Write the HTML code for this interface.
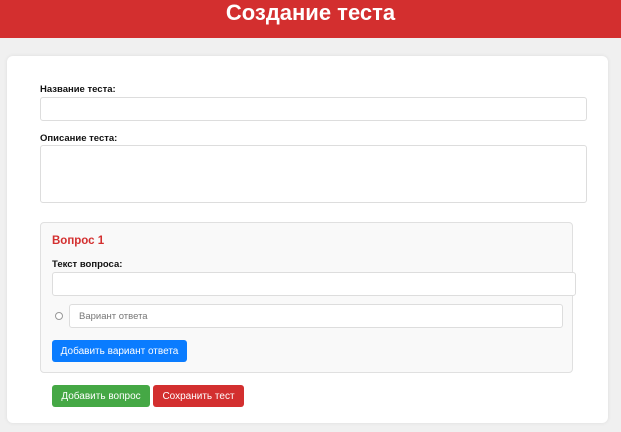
<!DOCTYPE html>
<html><head><meta charset="utf-8"><style>
*{box-sizing:border-box;margin:0;padding:0}
body{width:621px;height:432px;background:#f0f0f0;font-family:"Liberation Sans",Arial,sans-serif;position:relative;overflow:hidden}
.hdr{position:absolute;left:0;top:0;width:621px;height:38px;background:#d32f2f;color:#fff;font-weight:bold;font-size:22px;text-align:center;line-height:26px}
.card{position:absolute;left:7px;top:56px;width:601px;height:367px;background:#fff;border-radius:6px;box-shadow:0 0 4px rgba(0,0,0,.08)}
.a{position:absolute}
.lbl{font-size:9.5px;font-weight:bold;color:#111}
.in{background:#fff;border:1px solid #ddd;border-radius:3px}
.btn{position:absolute;color:#fff;font-size:10px;text-align:center;border-radius:3px}
</style></head><body>
<div class="hdr">Создание теста</div>
<div class="card"></div>
<div class="a lbl" style="left:40px;top:84px">Название теста:</div>
<div class="a in" style="left:40px;top:97px;width:547px;height:24px"></div>
<div class="a lbl" style="left:40px;top:133px">Описание теста:</div>
<div class="a in" style="left:40px;top:145px;width:547px;height:58px"></div>
<div class="a" style="left:40px;top:222px;width:533px;height:151px;background:#f9f9f9;border:1px solid #e0e0e0;border-radius:4px"></div>
<div class="a" style="left:52px;top:235px;font-size:11.5px;font-weight:bold;color:#d32f2f">Вопрос 1</div>
<div class="a lbl" style="left:52px;top:259px">Текст вопроса:</div>
<div class="a in" style="left:52px;top:272px;width:524px;height:24px"></div>
<div class="a" style="left:55px;top:312px;width:8px;height:8px;border:1px solid #999;border-radius:50%;background:#fff"></div>
<div class="a in" style="left:69px;top:304px;width:494px;height:24px;font-size:9.5px;color:#777;padding-left:9px;line-height:24px">Вариант ответа</div>
<div class="btn" style="left:52px;top:340px;width:135px;height:22px;line-height:24px;background:#0a7cff">Добавить вариант ответа</div>
<div class="btn" style="left:52px;top:385px;width:98px;height:22px;line-height:24px;background:#45a845">Добавить вопрос</div>
<div class="btn" style="left:153px;top:385px;width:91px;height:22px;line-height:24px;background:#d32f2f">Сохранить тест</div>
</body></html>
